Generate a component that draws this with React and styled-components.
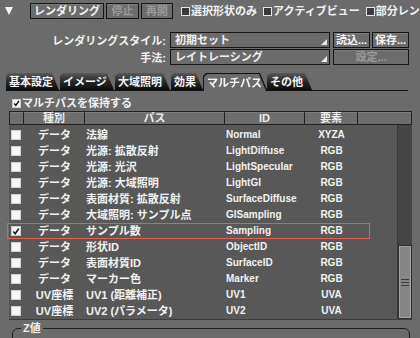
import React from 'react';
import styled, { createGlobalStyle } from 'styled-components';

const GlobalStyle = createGlobalStyle`
  html, body {
    margin: 0;
    padding: 0;
    background: #6b6b6b;
  }
  body {
    width: 420px;
    height: 338px;
    overflow: hidden;
    font-family: "Liberation Sans", "Noto Sans CJK JP", sans-serif;
    font-weight: bold;
    font-size: 11px;
    color: #f2f2f2;
  }
`;

const Panel = styled.div`
  width: 420px;
  height: 338px;
  overflow: hidden;
  display: flex;
  flex-direction: column;

  & > * {
    flex-shrink: 0;
  }
`;

/* top toolbar */
const Toolbar = styled.div`
  display: flex;
  align-items: center;
  height: 16px;
  padding: 3px 0 0 5px;
  white-space: nowrap;
  line-height: 14px;
`;

const Disclosure = styled.span`
  width: 0;
  height: 0;
  border-left: 4px solid transparent;
  border-right: 4px solid transparent;
  border-top: 8px solid #f5f5f5;
  margin-right: 17px;
`;

const Button = styled.div`
  box-sizing: border-box;
  width: ${p => p.$w}px;
  height: 16px;
  margin-right: ${p => p.$gap ?? 2}px;
  border: 1px solid #151515;
  background: #6c6c6c;
  box-shadow: inset 0 1px 0 rgba(255, 255, 255, 0.1);
  color: ${p => (p.$disabled ? '#9b9b9b' : '#f4f4f4')};
  display: flex;
  align-items: center;
  justify-content: center;
  line-height: 14px;
  flex-shrink: 0;
`;

const CheckItem = styled.label`
  display: flex;
  align-items: center;
  margin-left: ${p => p.$ml ?? 6}px;
  flex-shrink: 0;
`;

const Box = styled.span`
  box-sizing: border-box;
  width: ${p => p.$size ?? 9}px;
  height: ${p => p.$size ?? 9}px;
  margin-right: 1px;
  border: 1px solid ${p => (p.$light ? '#cfcfcf' : '#e6e6e6')};
  background: ${p => (p.$light ? '#f6f6f6' : '#3b3b3b')};
  display: flex;
  align-items: center;
  justify-content: center;
  flex-shrink: 0;
`;

/* settings rows */
const Form = styled.div`
  display: flex;
  flex-direction: column;
  gap: 1px;
  margin-top: 13px;
`;

const FormRow = styled.div`
  display: flex;
  align-items: center;
  height: 16px;
`;

const FormLabel = styled.span`
  width: 166px;
  text-align: right;
  margin-right: 4px;
`;

const Select = styled.div`
  box-sizing: border-box;
  width: 160px;
  height: 16px;
  margin-right: 3px;
  border: 1px solid #151515;
  padding-left: 4px;
  display: flex;
  justify-content: space-between;
  line-height: 14px;
`;

const Corner = styled.span`
  align-self: flex-end;
  width: 0;
  height: 0;
  margin: 0 2px 2px 0;
  border-left: 6px solid transparent;
  border-bottom: 6px solid #e8e8e8;
`;

/* tabs */
const TabBar = styled.div`
  display: flex;
  align-items: flex-end;
  height: 17px;
  margin: 8px 12px 0 6px;
  border-bottom: 1px solid #111;
`;

const Tab = styled.div`
  width: ${p => p.$w}px;
  height: 17px;
  margin-right: 1px;
  margin-bottom: ${p => (p.$active ? -1 : 0)}px;
  filter: ${p =>
    p.$active
      ? 'drop-shadow(1px 0 0 #111) drop-shadow(-1px 0 0 #111) drop-shadow(0 -1px 0 #111)'
      : 'none'};
`;

const TabFace = styled.div`
  height: 100%;
  padding-left: 3px;
  display: flex;
  align-items: center;
  line-height: 14px;
  color: #f6f6f6;
  background: ${p =>
    p.$active ? '#6b6b6b' : 'linear-gradient(#5a5a5a 0%, #2c2c2c 45%, #0c0c0c 100%)'};
  clip-path: polygon(0 100%, 0 3px, 3px 0, calc(100% - 7px) 0, 100% 100%);
`;

const KeepRow = styled.div`
  display: flex;
  align-items: center;
  height: 12px;
  margin: 6px 0 0 12px;
  line-height: 12px;
`;

/* table */
const Table = styled.div`
  margin: 2px 8px 0 9px;
  display: flex;
  flex-direction: column;
`;

const cols = '15px 61px 140px 80px 53px';

const HeaderRow = styled.div`
  display: grid;
  grid-template-columns: ${cols} 54px;
  height: 14px;
`;

const HeaderCell = styled.div`
  box-sizing: border-box;
  border: 1px solid #222;
  border-left-width: ${p => (p.$first ? 1 : 0)}px;
  background: #6d6d6d;
  box-shadow: inset 0 1px 0 rgba(255, 255, 255, 0.12);
  color: #ececec;
  text-align: center;
  line-height: 12px;
`;

const Body = styled.div`
  display: flex;
  height: 194px;
  background: #585858;
  border-bottom: 1px solid #3e3e3e;
`;

const Rows = styled.div`
  flex: 1;
  padding-top: 2px;
`;

const Row = styled.div`
  position: relative;
  display: grid;
  grid-template-columns: ${cols};
  height: 16px;
  align-items: center;
  line-height: 14px;
  white-space: nowrap;

  &::after {
    content: '';
    display: ${p => (p.$marked ? 'block' : 'none')};
    position: absolute;
    left: -2px;
    top: 0;
    width: 363px;
    height: 16px;
    box-sizing: border-box;
    border: 1px solid #e0604f;
  }
`;

const Cell = styled.div`
  display: flex;
  justify-content: ${p => (p.$center ? 'center' : 'flex-start')};
  padding-left: ${p => (p.$center ? 0 : 1)}px;
  font-size: ${p => (p.$latin ? 10 : 11)}px;
`;

const Scrollbar = styled.div`
  width: 14px;
  background: #454545;
  border-left: 1px solid #3a3a3a;
  display: flex;
  flex-direction: column;
  justify-content: flex-end;
`;

const Thumb = styled.div`
  height: 74px;
  box-sizing: border-box;
  border: 1px solid #2e2e2e;
  box-shadow: inset 0 0 0 1px #a4a4a4;
  background: #868686;
  display: flex;
  flex-direction: column;
  align-items: center;
  justify-content: center;
  gap: 2px;
`;

const Grip = styled.span`
  width: 8px;
  height: 1px;
  background: #3a3a3a;
`;

const GroupBox = styled.fieldset`
  margin: 2px 10px 0 12px;
  padding: 0;
  height: 30px;
  border: 1px solid #1d1d1d;
  border-radius: 6px;
`;

const Legend = styled.legend`
  padding: 0 2px;
  margin-left: 8px;
  line-height: 12px;
  color: #f2f2f2;
`;

function CheckMark({ color = '#111' }) {
  return (
    <svg width="9" height="9" viewBox="0 0 9 9">
      <path d="M1.5 4.5 L3.6 7 L7.6 1.3" fill="none" stroke={color} strokeWidth="1.8" />
    </svg>
  );
}

const tabs = [
  ['基本設定', 53],
  ['イメージ', 54],
  ['大域照明', 55],
  ['効果', 32],
  ['マルチパス', 62, true],
  ['その他', 45],
];

const passes = [
  ['データ', '法線', 'Normal', 'XYZA'],
  ['データ', '光源: 拡散反射', 'LightDiffuse', 'RGB'],
  ['データ', '光源: 光沢', 'LightSpecular', 'RGB'],
  ['データ', '光源: 大域照明', 'LightGI', 'RGB'],
  ['データ', '表面材質: 拡散反射', 'SurfaceDiffuse', 'RGB'],
  ['データ', '大域照明: サンプル点', 'GISampling', 'RGB'],
  ['データ', 'サンプル数', 'Sampling', 'RGB', true],
  ['データ', '形状ID', 'ObjectID', 'RGB'],
  ['データ', '表面材質ID', 'SurfaceID', 'RGB'],
  ['データ', 'マーカー色', 'Marker', 'RGB'],
  ['UV座標', 'UV1 (距離補正)', 'UV1', 'UVA'],
  ['UV座標', 'UV2 (パラメータ)', 'UV2', 'UVA'],
];

export default function App() {
  return (
    <>
      <GlobalStyle />
      <Panel>
        <Toolbar>
          <Disclosure />
          <Button $w={74}>レンダリング</Button>
          <Button $w={33} $disabled>停止</Button>
          <Button $w={32} $disabled $gap={0}>再開</Button>
          <CheckItem $ml={8}><Box />選択形状のみ</CheckItem>
          <CheckItem><Box />アクティブビュー</CheckItem>
          <CheckItem><Box />部分レンダリング</CheckItem>
        </Toolbar>

        <Form>
          <FormRow>
            <FormLabel>レンダリングスタイル:</FormLabel>
            <Select>初期セット<Corner /></Select>
            <Button $w={37}>読込...</Button>
            <Button $w={37}>保存...</Button>
          </FormRow>
          <FormRow>
            <FormLabel>手法:</FormLabel>
            <Select>レイトレーシング<Corner /></Select>
            <Button $w={76} $disabled>設定...</Button>
          </FormRow>
        </Form>

        <TabBar>
          {tabs.map(([label, w, active]) => (
            <Tab key={label} $w={w} $active={active}>
              <TabFace $active={active}>{label}</TabFace>
            </Tab>
          ))}
        </TabBar>

        <KeepRow>
          <Box $light>
            <CheckMark />
          </Box>
          マルチパスを保持する
        </KeepRow>

        <Table>
          <HeaderRow>
            <HeaderCell $first />
            <HeaderCell>種別</HeaderCell>
            <HeaderCell>パス</HeaderCell>
            <HeaderCell>ID</HeaderCell>
            <HeaderCell>要素</HeaderCell>
            <HeaderCell />
          </HeaderRow>
          <Body>
            <Rows>
              {passes.map(([kind, pass, id, elem, on]) => (
                <Row key={id} $marked={on}>
                  <Cell $center>
                    <Box $light $size={10}>{on && <CheckMark />}</Box>
                  </Cell>
                  <Cell $center>{kind}</Cell>
                  <Cell>{pass}</Cell>
                  <Cell $latin>{id}</Cell>
                  <Cell $center $latin>{elem}</Cell>
                </Row>
              ))}
            </Rows>
            <Scrollbar>
              <Thumb>
                <Grip />
                <Grip />
                <Grip />
              </Thumb>
            </Scrollbar>
          </Body>
        </Table>

        <GroupBox>
          <Legend>Z値</Legend>
        </GroupBox>
      </Panel>
    </>
  );
}
